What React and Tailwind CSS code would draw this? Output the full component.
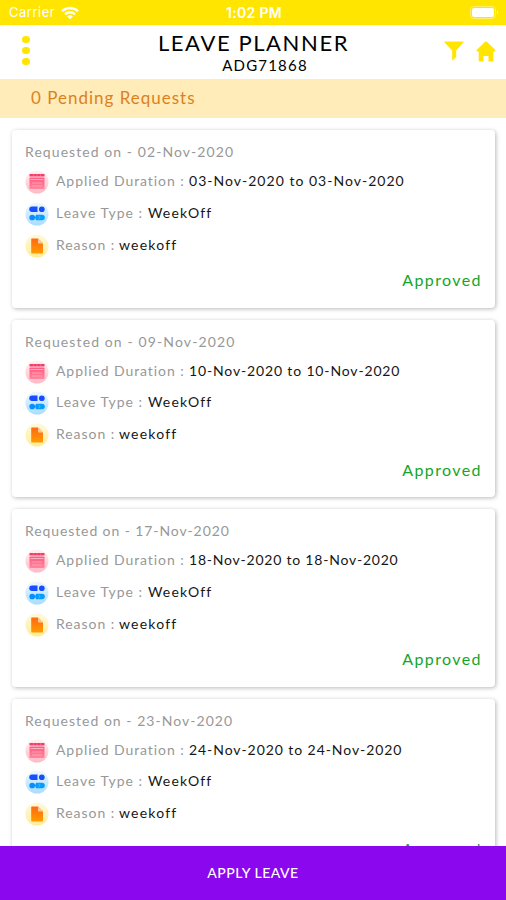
const requests = [
  { requested: "02-Nov-2020", duration: "03-Nov-2020 to 03-Nov-2020", reqTrack: "tracking-[1.07px]", durTrack: "tracking-[1.02px]" },
  { requested: "09-Nov-2020", duration: "10-Nov-2020 to 10-Nov-2020", reqTrack: "tracking-[1.12px]", durTrack: "tracking-[0.85px]" },
  { requested: "17-Nov-2020", duration: "18-Nov-2020 to 18-Nov-2020", reqTrack: "tracking-[0.9px]", durTrack: "tracking-[0.78px]" },
  { requested: "23-Nov-2020", duration: "24-Nov-2020 to 24-Nov-2020", reqTrack: "tracking-[1.03px]", durTrack: "tracking-[0.93px]" },
];

const WifiIcon = () => (
  <svg className="h-[14px] w-[18px]" viewBox="0 0 18 14" fill="none" stroke="white" strokeWidth="2.4">
    <path d="M1 5.2a11.5 11.5 0 0 1 16 0" />
    <path d="M4 8.3a7.2 7.2 0 0 1 10 0" />
    <path d="M9 13.2 6.2 10.4a4 4 0 0 1 5.6 0Z" fill="white" stroke="none" />
  </svg>
);

const BatteryIcon = () => (
  <svg className="h-[13px] w-[29px]" viewBox="0 0 29 13">
    <rect x="0.5" y="0.5" width="25" height="12" rx="3.5" fill="none" stroke="white" strokeOpacity="0.4" />
    <rect x="2" y="2" width="22" height="9" rx="2" fill="white" />
    <path d="M27 4.5c1.6.5 1.6 3.5 0 4z" fill="white" fillOpacity="0.6" />
  </svg>
);

const FilterIcon = () => (
  <svg className="h-[20px] w-[20px]" viewBox="0 0 20 20" fill="#ffe500">
    <path d="M1 .5h18c.6 0 .8.6.4 1L12.2 9.500v6.500L9 19.300c-.4.300-.8.100-.8-.4V9.500L.6 1.500C.2 1.100.4.5 1 .5Z" />
  </svg>
);

const HomeIcon = () => (
  <svg className="h-[21px] w-[20px]" viewBox="0 0 20 21" fill="#ffe500">
    <path d="M8.900.9c.6-.6 1.600-.6 2.200 0l8 7.900c.700.700.4 1.700-.6 1.700H17.300v8.700c0 .8-.5 1.300-1.300 1.300h-3.500v-5.500h-5v5.500H4c-.8 0-1.300-.5-1.300-1.300v-8.700H1.500c-1 0-1.300-1-.6-1.700Z" />
  </svg>
);

const CalendarIcon = () => (
  <svg className="h-6 w-6" viewBox="0 0 24 24">
    <defs>
      <linearGradient id="pinkHalo" x2="0" y2="1">
        <stop stopColor="#fff2f4" />
        <stop offset="1" stopColor="#ffb9c5" />
      </linearGradient>
      <linearGradient id="pinkBody" x2="0" y2="1">
        <stop stopColor="#ff5b81" />
        <stop offset="1" stopColor="#ff869c" />
      </linearGradient>
    </defs>
    <circle cx="12" cy="12" r="11.500" fill="url(#pinkHalo)" />
    <path d="M4.500 5.300h15" stroke="#f43d68" strokeWidth="2.400" strokeDasharray="3.600 0.200" />
    <rect x="4.500" y="7.500" width="15" height="11.500" rx="0.8" fill="url(#pinkBody)" />
    <path d="M5.500 9.500h13" stroke="#ffb5c4" strokeWidth="0.900" />
    <path d="M7 13h10M7 16h10" stroke="#ffa5b5" strokeWidth="0.900" />
  </svg>
);

const TypeIcon = () => (
  <svg className="h-6 w-6" viewBox="0 0 24 24">
    <defs>
      <linearGradient id="blueHalo" x2="0" y2="1">
        <stop stopColor="#eef9ff" />
        <stop offset="1" stopColor="#a9dcff" />
      </linearGradient>
    </defs>
    <circle cx="12" cy="12" r="11.500" fill="url(#blueHalo)" />
    <path d="M7 4.500h5.500v5.500H7a2.750 2.750 0 0 1 0-5.500Z" fill="#174eff" />
    <circle cx="16.800" cy="7.250" r="2.850" fill="#174eff" />
    <circle cx="7.200" cy="15.500" r="2.850" fill="#078fff" />
    <path d="M11 12.700h6a2.800 2.800 0 0 1 0 5.600h-6l-1-2.800Z" fill="#069cff" />
    <path d="m13.500 14 1.700 1.500-1.700 1.500" fill="none" stroke="#6fc7ff" strokeWidth="0.700" />
  </svg>
);

const ReasonIcon = () => (
  <svg className="h-6 w-6" viewBox="0 0 24 24">
    <defs>
      <linearGradient id="yellowHalo" x2="0" y2="1">
        <stop stopColor="#fff9dc" />
        <stop offset="1" stopColor="#ffed96" />
      </linearGradient>
      <linearGradient id="orangePage" x2="0" y2="1">
        <stop stopColor="#ff6813" />
        <stop offset="1" stopColor="#ff9c00" />
      </linearGradient>
    </defs>
    <circle cx="12" cy="12" r="11.500" fill="url(#yellowHalo)" />
    <path d="M7.200 4.500H13l5 5v9c0 .7-.4 1-1 1H7.200c-.7 0-1-.4-1-1v-13c0-.6.400-1 1-1Z" fill="url(#orangePage)" />
    <path d="M13 4.500v4.200c0 .5.3.8.8.8H18Z" fill="#ffc794" />
  </svg>
);

const DetailRow = ({ icon, label, labelClass, value, valueClass }) => (
  <div className="flex h-[31.700px] items-start">
    <div className="mt-[3px] mr-[7px] shrink-0">{icon}</div>
    <div className="flex whitespace-nowrap leading-[27px]">
      <span className={`shrink-0 text-[#989898] ${labelClass}`}>{label}</span>
      <span className={`text-[#161616] ${valueClass}`}>{value}</span>
    </div>
  </div>
);

const RequestCard = ({ request }) => (
  <div className="flex h-[177.500px] shrink-0 flex-col rounded-[4px] bg-white pr-[13px] pl-[13px] text-[14px] shadow-[1px_1px_4px_rgba(0,0,0,0.28)]">
    <p className={`mt-[11px] h-[26.200px] leading-[21px] whitespace-nowrap text-[#989898] ${request.reqTrack}`}>
      Requested on - {request.requested}
    </p>
    <DetailRow
      icon={<CalendarIcon />}
      label="Applied Duration :"
      labelClass="w-[133px] tracking-[0.92px]"
      value={request.duration}
      valueClass={request.durTrack}
    />
    <DetailRow
      icon={<TypeIcon />}
      label="Leave Type :"
      labelClass="w-[92px] tracking-[1px]"
      value="WeekOff"
      valueClass="tracking-[1.15px]"
    />
    <DetailRow
      icon={<ReasonIcon />}
      label="Reason :"
      labelClass="w-[63px] tracking-[0.95px]"
      value="weekoff"
      valueClass="tracking-[1.2px]"
    />
    <p className="mt-[6px] text-right text-[16px] leading-[24px] tracking-[1.400px] text-[#15a52b]">Approved</p>
  </div>
);

const App = () => {
  return (
    <div className="flex h-[900px] w-[506px] flex-col overflow-hidden bg-white font-['Lato',sans-serif]">
      <div className="grid h-[24.500px] shrink-0 grid-cols-3 items-center bg-[#ffe500] pt-[1px] pr-[7px] pl-[9px] font-['Inter',sans-serif] text-[13px] text-white">
        <div className="flex items-center gap-[6px]">
          <span className="tracking-[0.500px]">Carrier</span>
          <WifiIcon />
        </div>
        <span className="text-center text-[14px] font-semibold tracking-[0.300px] whitespace-nowrap">1:02 PM</span>
        <div className="flex justify-end">
          <BatteryIcon />
        </div>
      </div>

      <header className="grid h-[54.500px] shrink-0 grid-cols-[60px_1fr_60px] items-center">
        <div className="flex flex-col gap-[3.500px] pb-[3px] pl-[22px]">
          <span className="h-[7.500px] w-[7.500px] rounded-full bg-[#ffe500]" />
          <span className="h-[7.500px] w-[7.500px] rounded-full bg-[#ffe500]" />
          <span className="h-[7.500px] w-[7.500px] rounded-full bg-[#ffe500]" />
        </div>
        <div className="pt-[1px] text-center text-black">
          <h1 className="pl-[1px] text-[22px] leading-[25px] tracking-[1.600px] whitespace-nowrap">LEAVE PLANNER</h1>
          <p className="pl-[24px] text-[15px] leading-[20px] tracking-[1.200px]">ADG71868</p>
        </div>
        <div className="-ml-[2px] flex items-center gap-[12px]">
          <div className="pb-[2px]">
            <FilterIcon />
          </div>
          <HomeIcon />
        </div>
      </header>

      <div className="flex h-[39px] shrink-0 items-center bg-[#ffecb9] pb-[2px] pl-[31px] text-[17px] tracking-[1px] text-[#dc801e]">
        0 Pending Requests
      </div>

      <main className="flex min-h-0 flex-1 flex-col gap-[12px] overflow-hidden pt-[12px] pr-[11px] pl-[12px]">
        {requests.map((request) => (
          <RequestCard key={request.requested} request={request} />
        ))}
      </main>

      <button className="h-[54px] shrink-0 bg-[#8b08ee] pb-[2px] text-[14px] font-medium tracking-[0.500px] text-white">
        APPLY LEAVE
      </button>
    </div>
  );
};

export default App;
